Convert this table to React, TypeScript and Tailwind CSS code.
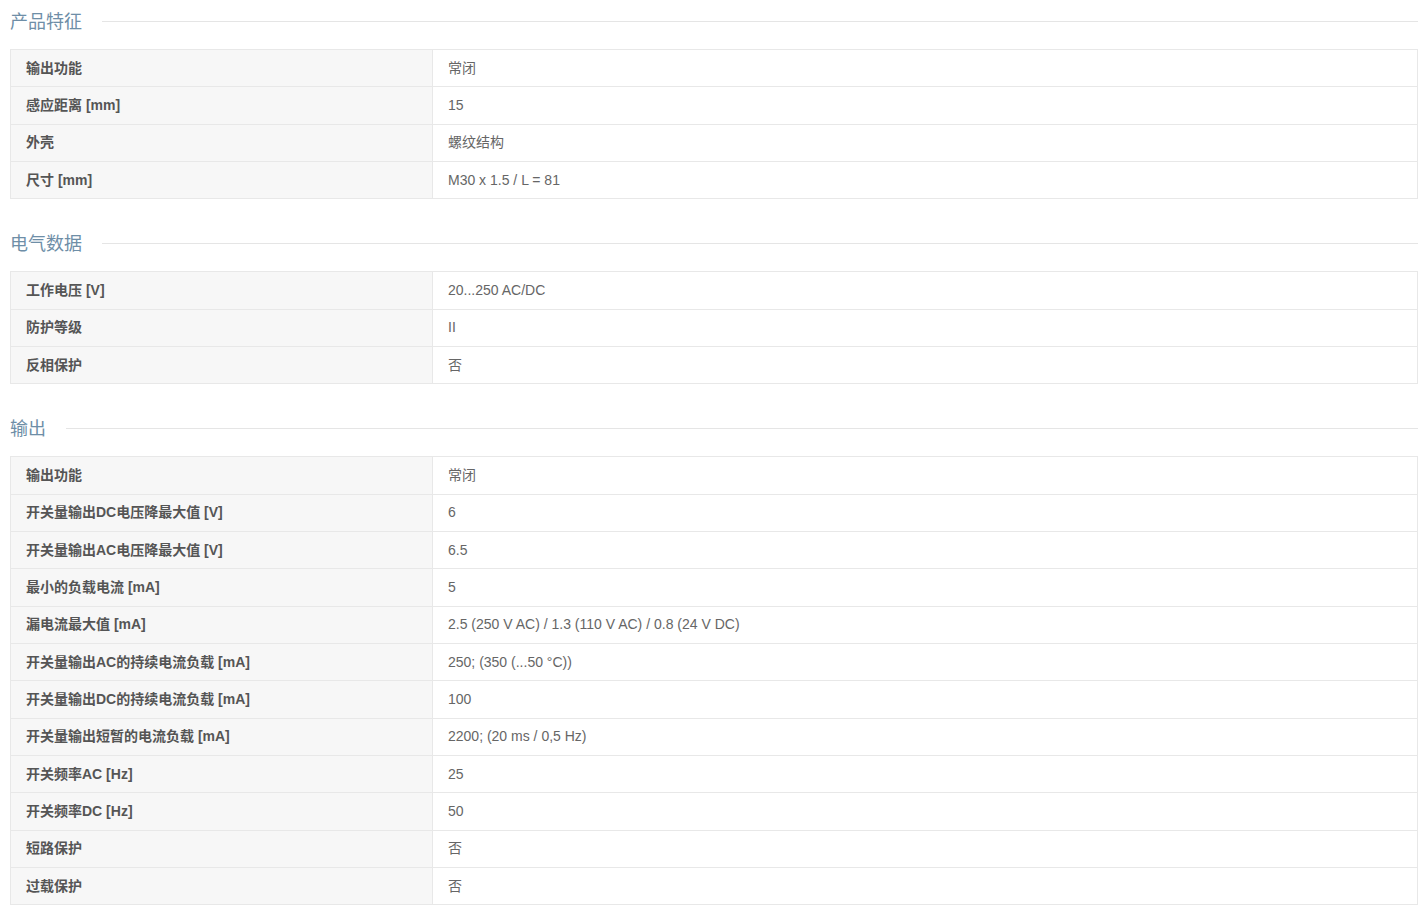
const sections: { title: string; rows: [string, string][] }[] = [
  {
    title: '产品特征',
    rows: [
      ['输出功能', '常闭'],
      ['感应距离 [mm]', '15'],
      ['外壳', '螺纹结构'],
      ['尺寸 [mm]', 'M30 x 1.5 / L = 81'],
    ],
  },
  {
    title: '电气数据',
    rows: [
      ['工作电压 [V]', '20...250 AC/DC'],
      ['防护等级', 'II'],
      ['反相保护', '否'],
    ],
  },
  {
    title: '输出',
    rows: [
      ['输出功能', '常闭'],
      ['开关量输出DC电压降最大值 [V]', '6'],
      ['开关量输出AC电压降最大值 [V]', '6.5'],
      ['最小的负载电流 [mA]', '5'],
      ['漏电流最大值 [mA]', '2.5 (250 V AC) / 1.3 (110 V AC) / 0.8 (24 V DC)'],
      ['开关量输出AC的持续电流负载 [mA]', '250; (350 (...50 °C))'],
      ['开关量输出DC的持续电流负载 [mA]', '100'],
      ['开关量输出短暂的电流负载 [mA]', '2200; (20 ms / 0,5 Hz)'],
      ['开关频率AC [Hz]', '25'],
      ['开关频率DC [Hz]', '50'],
      ['短路保护', '否'],
      ['过载保护', '否'],
    ],
  },
];

function SpecSection({ title, rows, first }: { title: string; rows: [string, string][]; first: boolean }) {
  return (
    <section className={first ? '' : 'mt-[23px]'}>
      <div className="flex h-[42px] items-center gap-[20px]">
        <h3 className="mt-[2px] text-[18px] leading-[24px] font-normal text-[#6e8ea7]">{title}</h3>
        <div className="h-px flex-1 bg-[#e5e5e5]" />
      </div>
      <div className="mt-[7px] border-x border-t border-[#e8e8e8]">
        {rows.map(([label, value], i) => (
          <div key={label + i} className="flex h-[37.33px] border-b border-[#e8e8e8] text-[14px]">
            <div className="flex w-[422px] shrink-0 items-center border-r border-[#e8e8e8] bg-[#f7f7f7] pl-[15px] font-bold text-[#555555]">
              {label}
            </div>
            <div className="flex flex-1 items-center pl-[15px] text-[#666666]">{value}</div>
          </div>
        ))}
      </div>
    </section>
  );
}

export default function App() {
  return (
    <div
      className="min-h-screen bg-white pr-[10px] pl-[10px]"
      style={{ fontFamily: '"Liberation Sans", Arial, "Noto Sans CJK SC", sans-serif' }}
    >
      {sections.map((s, i) => (
        <SpecSection key={s.title} title={s.title} rows={s.rows} first={i === 0} />
      ))}
    </div>
  );
}
